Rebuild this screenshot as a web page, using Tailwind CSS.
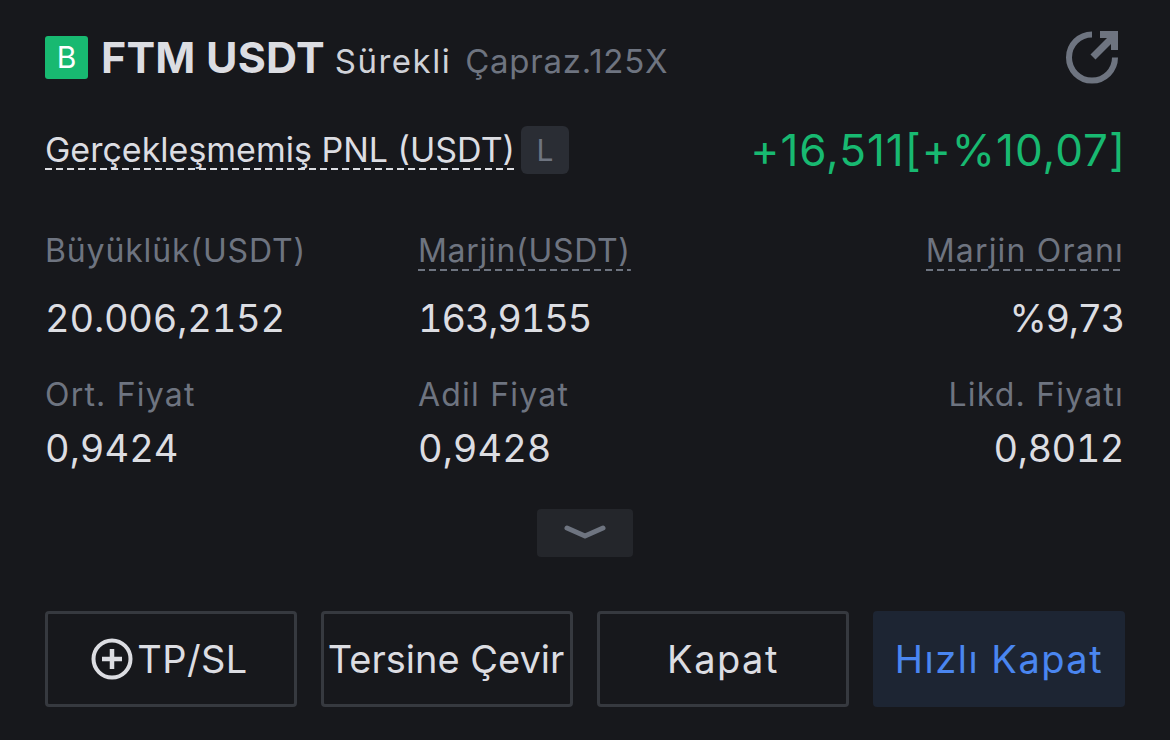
<!DOCTYPE html>
<html lang="en">
<head>
    <meta charset="UTF-8">
    <title>FTM USDT</title>
    <script src="https://cdn.jsdelivr.net/npm/@tailwindcss/browser@4"></script>
</head>
<body class="bg-[#17181c] font-[Inter,sans-serif] w-[1170px] h-[740px] overflow-hidden">
    <div class="pl-[45px] pr-[46px] pt-[36px]">

        <!-- header -->
        <div class="flex items-baseline h-[43px]">
            <div class="self-start w-[43px] h-[43px] rounded-[3px] bg-[#18b971] text-white text-[30px] leading-[43px] text-center">B</div>
            <div class="ml-[13px] text-[43px] tracking-[0.2px] font-bold text-[#dcdde2] leading-[43px]">FTM USDT</div>
            <div class="ml-[10px] text-[33px] tracking-[1.5px] text-[#d0d2d8] leading-[43px]">Sürekli</div>
            <div class="ml-[14px] text-[33px] tracking-[0.75px] text-[#6e7480] leading-[43px]">Çapraz.125X</div>
            <svg class="ml-auto mr-[5px] self-start -mt-[6px]" width="54" height="54" viewBox="0 0 54 54" fill="none" stroke="#6e7480">
                <path d="M27 4.5 A23 23 0 1 0 50 27.5" stroke-width="6"/>
                <path d="M28 27 L48 7" stroke-width="7"/>
                <path d="M35 1 H53 V20 H46 V8 H35 Z" fill="#6e7480" stroke="none"/>
            </svg>
        </div>

        <!-- pnl -->
        <div class="flex items-center justify-between mt-[47px] h-[48px]">
            <div class="flex items-center">
                <span class="inline-block text-[34px] leading-[40px] text-[#dcdde2] bg-[repeating-linear-gradient(90deg,#dcdde2_0_7px,transparent_7px_11px)] bg-[length:100%_2px] bg-no-repeat bg-bottom">Gerçekleşmemiş PNL (USDT)</span>
                <span class="ml-[6px] w-[48px] h-[48px] rounded-[6px] bg-[#2a2d34] text-[#6e7480] text-[30px] leading-[48px] text-center">L</span>
            </div>
            <div class="-mr-[2px] text-[44px] tracking-[1px] text-[#18b971] leading-[48px]">+16,511[+%10,07]</div>
        </div>

        <!-- stats -->
        <div class="grid grid-cols-[373px_1fr_auto] mt-[57px]">
            <div class="text-[32px] tracking-[0.85px] leading-[40px] text-[#6e7480]">Büyüklük(USDT)</div>
            <div><span class="inline-block text-[32px] tracking-[0.7px] leading-[40px] text-[#6e7480] bg-[repeating-linear-gradient(90deg,#6e7480_0_7px,transparent_7px_11px)] bg-[length:100%_2px] bg-no-repeat bg-bottom">Marjin(USDT)</span></div>
            <div class="text-right"><span class="inline-block text-[32px] tracking-[1.2px] leading-[40px] text-[#6e7480] bg-[repeating-linear-gradient(90deg,#6e7480_0_7px,transparent_7px_11px)] bg-[length:100%_2px] bg-no-repeat bg-bottom">Marjin Oranı</span></div>

            <div class="text-[38px] tabular-nums tracking-[-0.2px] leading-[44px] mt-[25px] text-[#dcdde2]">20.006,2152</div>
            <div class="text-[38px] tabular-nums tracking-[-1.2px] leading-[44px] mt-[25px] text-[#dcdde2]">163,9155</div>
            <div class="text-[38px] tabular-nums tracking-[-1.4px] leading-[44px] mt-[25px] text-[#dcdde2] text-right">%9,73</div>

            <div class="text-[32px] tracking-[1.2px] leading-[40px] mt-[35px] text-[#6e7480]">Ort. Fiyat</div>
            <div class="text-[32px] tracking-[1.2px] leading-[40px] mt-[35px] text-[#6e7480]">Adil Fiyat</div>
            <div class="text-[32px] tracking-[1.2px] leading-[40px] mt-[35px] text-[#6e7480] text-right">Likd. Fiyatı</div>

            <div class="text-[38px] tabular-nums leading-[44px] mt-[11px] text-[#dcdde2]">0,9424</div>
            <div class="text-[38px] tabular-nums leading-[44px] mt-[11px] text-[#dcdde2]">0,9428</div>
            <div class="text-[38px] tabular-nums tracking-[-0.5px] leading-[44px] mt-[11px] text-[#dcdde2] text-right">0,8012</div>
        </div>

        <!-- expand -->
        <div class="flex justify-center mt-[39px] pl-[1px]">
            <div class="w-[96px] h-[48px] rounded-[4px] bg-[#24262b] flex items-center justify-center">
                <svg width="44" height="18" viewBox="0 0 44 18" fill="none" stroke="#6e7480" stroke-width="5" stroke-linecap="round" stroke-linejoin="round">
                    <path d="M4 4 L22 12 L40 4"/>
                </svg>
            </div>
        </div>

        <!-- actions -->
        <div class="grid grid-cols-4 gap-[24px] mt-[54px] w-[1080px]">
            <button class="h-[96px] rounded-[4px] border-[3px] border-[#36393f] text-[#dcdde2] text-[38px] tracking-[0.4px] flex items-center justify-center">
                <svg class="mr-[4px] -ml-[3px]" width="42" height="42" viewBox="0 0 42 42" fill="none" stroke="#dcdde2">
                    <circle cx="21" cy="21" r="18.5" stroke-width="4"/>
                    <path d="M21 11 V31 M11 21 H31" stroke-width="4.5"/>
                </svg>TP/SL
            </button>
            <button class="h-[96px] rounded-[4px] border-[3px] border-[#36393f] text-[#dcdde2] text-[38px] whitespace-nowrap flex items-center justify-center"><span class="-ml-[2px]">Tersine Çevir</span></button>
            <button class="h-[96px] rounded-[4px] border-[3px] border-[#36393f] text-[#dcdde2] text-[38px] tracking-[1.5px] flex items-center justify-center">Kapat</button>
            <button class="h-[96px] rounded-[4px] bg-[#1d2533] text-[#4a86f0] text-[38px] tracking-[1.5px] flex items-center justify-center">Hızlı Kapat</button>
        </div>
    </div>
</body>
</html>
